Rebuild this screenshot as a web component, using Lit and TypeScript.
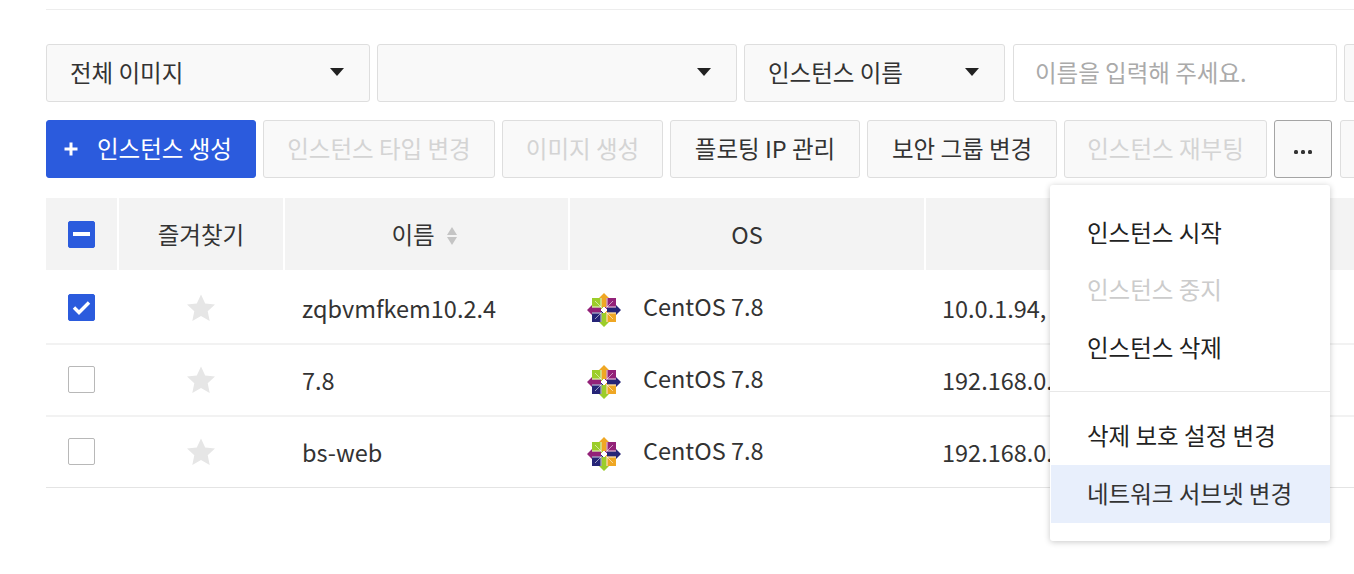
import { LitElement, html, css, svg } from "lit";
import { customElement } from "lit/decorators.js";

const centos = svg`<svg class="os-icon" width="34" height="34" viewBox="0 0 34 34">
  <rect x="5" y="5" width="11" height="11" fill="#9ccd2a"/>
  <rect x="18" y="5" width="11" height="11" fill="#932279"/>
  <rect x="5" y="18" width="11" height="11" fill="#262577"/>
  <rect x="18" y="18" width="11" height="11" fill="#efa724"/>
  <path d="M17 0l5 5h-2.5v9h-5v-9h-2.5z" fill="#efa724"/>
  <path d="M34 17l-5 5v-2.5h-9v-5h9v-2.5z" fill="#262577"/>
  <path d="M17 34l-5-5h2.5v-9h5v9h2.5z" fill="#9ccd2a"/>
  <path d="M0 17l5-5v2.5h9v5h-9v2.5z" fill="#932279"/>
  <path d="M8 8l7.5 7.5M26 8l-7.5 7.5M8 26l7.5-7.5M26 26l-7.5-7.5" stroke="#fff" stroke-width="1" opacity=".55"/>
  <path d="M14 5v9M20 5v9M5 14h9M5 20h9M20 14h9M20 20h9M14 20v9M20 20v9" stroke="#fff" stroke-width="1" opacity=".8"/>
  <rect x="15" y="15" width="4" height="4" fill="#fff"/>
</svg>`;

const star = svg`<svg class="star" width="30" height="30" viewBox="0 0 30 30"><path d="M15 1.5l4.2 9 9.8 1.1-7.3 6.6 2 9.8-8.7-4.9-8.7 4.9 2-9.8-7.3-6.6 9.8-1.1z" fill="#e6e6e6"/></svg>`;

const caret = svg`<svg class="caret" width="16" height="10" viewBox="0 0 16 10"><path d="M1 1h14l-7 8z" fill="#222"/></svg>`;

@customElement("app-root")
export class AppRoot extends LitElement {
  static styles = css`
    :host {
      display: block;
      width: 1354px;
      height: 574px;
      overflow: hidden;
      position: relative;
      background: #fff;
      font-family: "Noto Sans CJK KR", "Noto Sans", sans-serif;
      color: #333;
      font-size: 23.5px;
    }
    .page { padding: 9px 0 0 46px; width: 1500px; box-sizing: border-box; }
    .rule { height: 1px; background: #ededed; width: 1308px; margin-bottom: 34px; }
    .filters, .actions { display: flex; height: 58px; }
    .filters { gap: 7px; margin-bottom: 18px; }
    .actions { gap: 7px; margin-bottom: 20px; }
    .select, .input, .btn {
      box-sizing: border-box;
      height: 58px;
      padding-bottom: 3px;
      border: 1px solid #dedede;
      border-radius: 3px;
      background: #f9f9f9;
      display: flex;
      align-items: center;
      flex: none;
    }
    .select { padding-left: 23px; padding-right: 24px; padding-bottom: 2px; justify-content: space-between; }
    .select svg { margin-top: -1px; }
    .input { background: #fff; padding-left: 21px; padding-bottom: 2px; color: #aaa; margin-left: 1px; }
    .btn { justify-content: center; color: #333; }
    .btn.off { color: #d4d4d4; }
    .btn.primary { background: #2b5bdd; border-color: #2b5bdd; color: #fff; gap: 18px; justify-content: flex-start; padding-left: 16px; }
    .btn.primary svg { margin-top: 3px; }
    .btn.more { border-color: #a5a5a5; padding-bottom: 0; padding-top: 6px; }
    .dots { display: flex; gap: 3px; }
    .dots i { width: 4px; height: 4px; border-radius: 1.5px; background: #333; display: block; }
    .grid { display: grid; grid-template-columns: 71px 164px 283px 354px 500px; column-gap: 2px; }
    .th {
      height: 72px;
      margin-bottom: 3px;
      background: #f3f3f3;
      display: flex;
      align-items: center;
      justify-content: center;
      gap: 12px;
    }
    .td {
      height: 70px;
      margin-right: -2px;
      border-bottom: 2px solid #f2f2f2;
      display: flex;
      align-items: center;
      box-sizing: content-box;
    }
    .td.last { border-bottom: 1px solid #e4e4e4; }
    .td.check { padding-left: 22px; padding-bottom: 2px; height: 68px; }
    .td.fav { padding-left: 67px; }
    .name { padding-left: 17px; }
    .os { padding-left: 17px; gap: 22px; }
    .os svg { margin-top: 4px; }
    .os span { margin-bottom: 4px; }
    .ip { padding-left: 16px; white-space: nowrap; }
    .cb {
      width: 27px;
      height: 27px;
      box-sizing: border-box;
      border: 1px solid #b8b8b8;
      border-radius: 2px;
      background: #fff;
      display: flex;
      align-items: center;
      justify-content: center;
    }
    .cb.on { background: #2b5bdd; border-color: #2b5bdd; }
    .sort { display: flex; flex-direction: column; gap: 2px; margin: 3px 5px 0 0; }
    .sort i { display: block; width: 0; height: 0; border-left: 5.5px solid transparent; border-right: 5.5px solid transparent; }
    .sort i.u { border-bottom: 8px solid #c4c4c4; }
    .sort i.d { border-top: 8px solid #c4c4c4; }
    .menu {
      position: absolute;
      left: 1050px;
      top: 185px;
      width: 280px;
      height: 356px;
      box-sizing: border-box;
      background: #fff;
      border-radius: 3px;
      box-shadow: 0 1px 6px rgba(0,0,0,.22);
      padding: 19px 0 19px 1px;
      color: #222;
    }
    .item { height: 57.5px; box-sizing: border-box; padding-bottom: 2px; display: flex; align-items: center; padding-left: 36px; }
    .item.off { color: #ccc; }
    .item.hover { background: #e8effc; color: #333; }
    .sep { height: 1px; background: #e8e8e8; margin: 14px 0 16px -1px; }
  `;

  private row(name: string, ip: string, checked: boolean, last = false) {
    const l = last ? "last" : "";
    return html`
      <div class="td check ${l}">
        <span class="cb ${checked ? "on" : ""}">
          ${checked
            ? svg`<svg width="19" height="15" viewBox="0 0 19 15"><path d="M2 7.5l5 5 10-10" fill="none" stroke="#fff" stroke-width="3.4"/></svg>`
            : ""}
        </span>
      </div>
      <div class="td fav ${l}">${star}</div>
      <div class="td name ${l}">${name}</div>
      <div class="td os ${l}">${centos}<span>CentOS 7.8</span></div>
      <div class="td ip ${l}">${ip}</div>
    `;
  }

  render() {
    return html`
      <div class="page">
        <div class="rule"></div>
        <div class="filters">
          <div class="select" style="width:324px"><span>전체 이미지</span>${caret}</div>
          <div class="select" style="width:360px"><span></span>${caret}</div>
          <div class="select" style="width:261px"><span>인스턴스 이름</span>${caret}</div>
          <div class="input" style="width:324px">이름을 입력해 주세요.</div>
          <div class="select" style="width:120px"></div>
        </div>
        <div class="actions">
          <div class="btn primary" style="width:210px">
            <svg width="16" height="16" viewBox="0 0 16 16"><path d="M8 1.5v13M1.5 8h13" stroke="#fff" stroke-width="3"/></svg>
            <span>인스턴스 생성</span>
          </div>
          <div class="btn off" style="width:232px">인스턴스 타입 변경</div>
          <div class="btn off" style="width:161px">이미지 생성</div>
          <div class="btn" style="width:190px">플로팅 IP 관리</div>
          <div class="btn" style="width:190px">보안 그룹 변경</div>
          <div class="btn off" style="width:203px">인스턴스 재부팅</div>
          <div class="btn more" style="width:58px"><span class="dots"><i></i><i></i><i></i></span></div>
          <div class="btn" style="width:100px;margin-left:1px"></div>
        </div>
        <div class="grid">
          <div class="th">
            <span class="cb on"><svg width="17" height="5" viewBox="0 0 17 5"><rect x="0" y="0" width="17" height="4" fill="#fff"/></svg></span>
          </div>
          <div class="th">즐겨찾기</div>
          <div class="th"><span>이름</span><span class="sort"><i class="u"></i><i class="d"></i></span></div>
          <div class="th">OS</div>
          <div class="th"></div>
          ${this.row("zqbvmfkem10.2.4", "10.0.1.94,", true)}
          ${this.row("7.8", "192.168.0.", false)}
          ${this.row("bs-web", "192.168.0.", false, true)}
        </div>
      </div>
      <div class="menu">
        <div class="item">인스턴스 시작</div>
        <div class="item off">인스턴스 중지</div>
        <div class="item">인스턴스 삭제</div>
        <div class="sep"></div>
        <div class="item">삭제 보호 설정 변경</div>
        <div class="item hover">네트워크 서브넷 변경</div>
      </div>
    `;
  }
}
